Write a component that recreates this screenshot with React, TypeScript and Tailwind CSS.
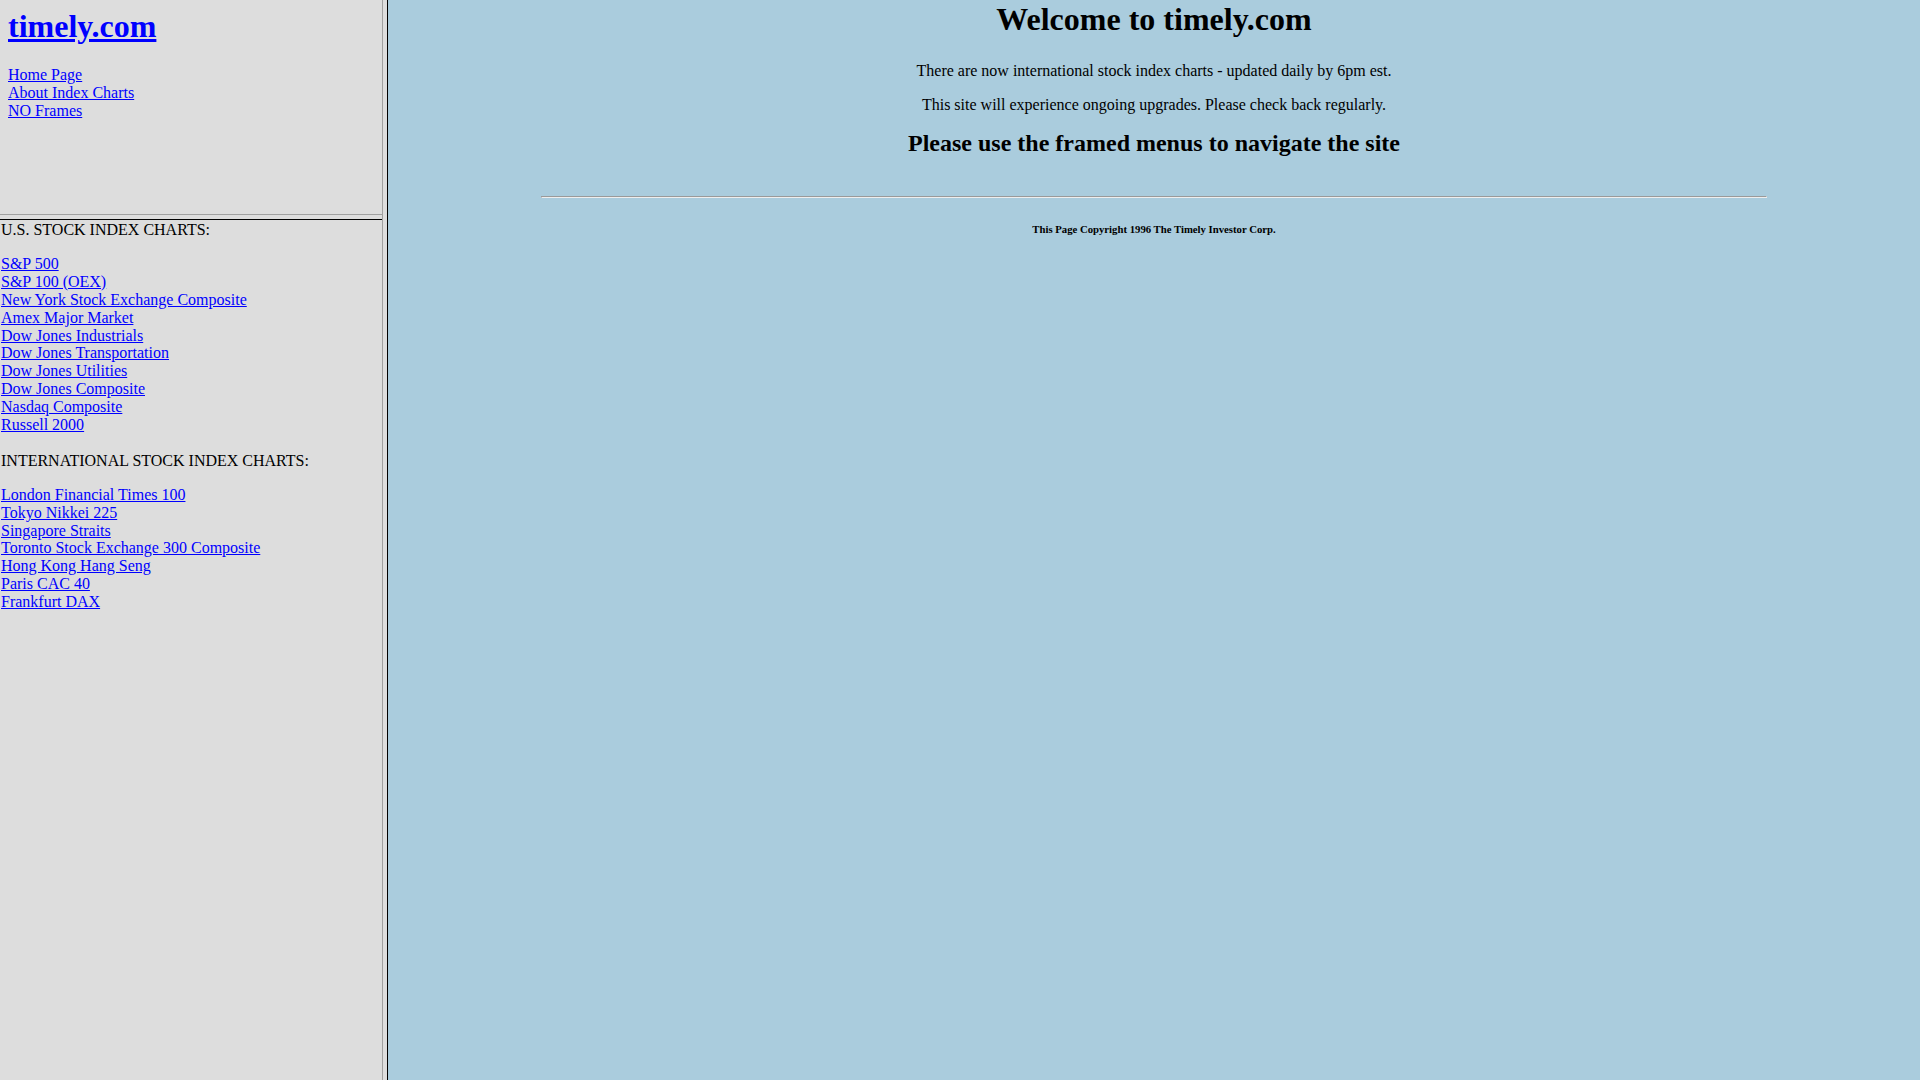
import React from 'react';

const usIndexes = [
  'S&P 500',
  'S&P 100 (OEX)',
  'New York Stock Exchange Composite',
  'Amex Major Market',
  'Dow Jones Industrials',
  'Dow Jones Transportation',
  'Dow Jones Utilities',
  'Dow Jones Composite',
  'Nasdaq Composite',
  'Russell 2000',
];

const intlIndexes = [
  'London Financial Times 100',
  'Tokyo Nikkei 225',
  'Singapore Straits',
  'Toronto Stock Exchange 300 Composite',
  'Hong Kong Hang Seng',
  'Paris CAC 40',
  'Frankfurt DAX',
];

const NavLink: React.FC<{ label: string }> = ({ label }) => (
  <a href="#" className="block w-fit text-[#0000ff] underline">
    {label}
  </a>
);

const App: React.FC = () => {
  return (
    <div className="flex h-screen w-full overflow-hidden font-['Liberation_Serif','Times_New_Roman',serif] text-[16px] leading-[18px] text-black">
      {/* left frameset */}
      <div className="flex w-[382px] shrink-0 flex-col bg-[#dddddd]">
        <div className="h-[214px] shrink-0 pl-[8px] pt-[8px]">
          <h1 className="text-[32px] font-bold leading-[37px]">
            <a href="#" className="text-[#0000ff] underline">timely.com</a>
          </h1>
          <div className="mt-[21px]">
            <NavLink label="Home Page" />
            <NavLink label="About Index Charts" />
            <NavLink label="NO Frames" />
          </div>
        </div>
        <div className="h-[6px] shrink-0 border-t border-b border-t-[#a0a0a0] border-b-black bg-[#dddddd]" />
        <div className="flex-1 pl-[1px] pt-[1px] leading-[17.9px]">
          <div>U.S. STOCK INDEX CHARTS:</div>
          <div className="mt-[16px]">
            {usIndexes.map((name) => (
              <NavLink key={name} label={name} />
            ))}
          </div>
          <div className="mt-[17.9px]">INTERNATIONAL STOCK INDEX CHARTS:</div>
          <div className="mt-[16px]">
            {intlIndexes.map((name) => (
              <NavLink key={name} label={name} />
            ))}
          </div>
        </div>
      </div>

      {/* frame border */}
      <div className="w-[6px] shrink-0 border-l border-r border-l-[#a0a0a0] border-r-black bg-[#dddddd]" />

      {/* main frame */}
      <div className="flex-1 bg-[#aaccdd] pt-[1px] text-center">
        <h1 className="text-[32px] font-bold leading-[37px]">Welcome to timely.com</h1>
        <p className="mt-[24px]">There are now international stock index charts - updated daily by 6pm est.</p>
        <p className="mt-[16px]">This site will experience ongoing upgrades. Please check back regularly.</p>
        <h2 className="mt-[15px] text-[24px] font-bold leading-[28px]">Please use the framed menus to navigate the site</h2>
        <hr className="mx-auto mt-[39px] h-[2px] w-[80%] border border-t-[#9a9a9a] border-l-[#9a9a9a] border-b-[#eeeeee] border-r-[#eeeeee]" />
        <h6 className="mt-[25px] text-[10.72px] font-bold leading-[12px]">This Page Copyright 1996 The Timely Investor Corp.</h6>
      </div>
    </div>
  );
};

export default App;
